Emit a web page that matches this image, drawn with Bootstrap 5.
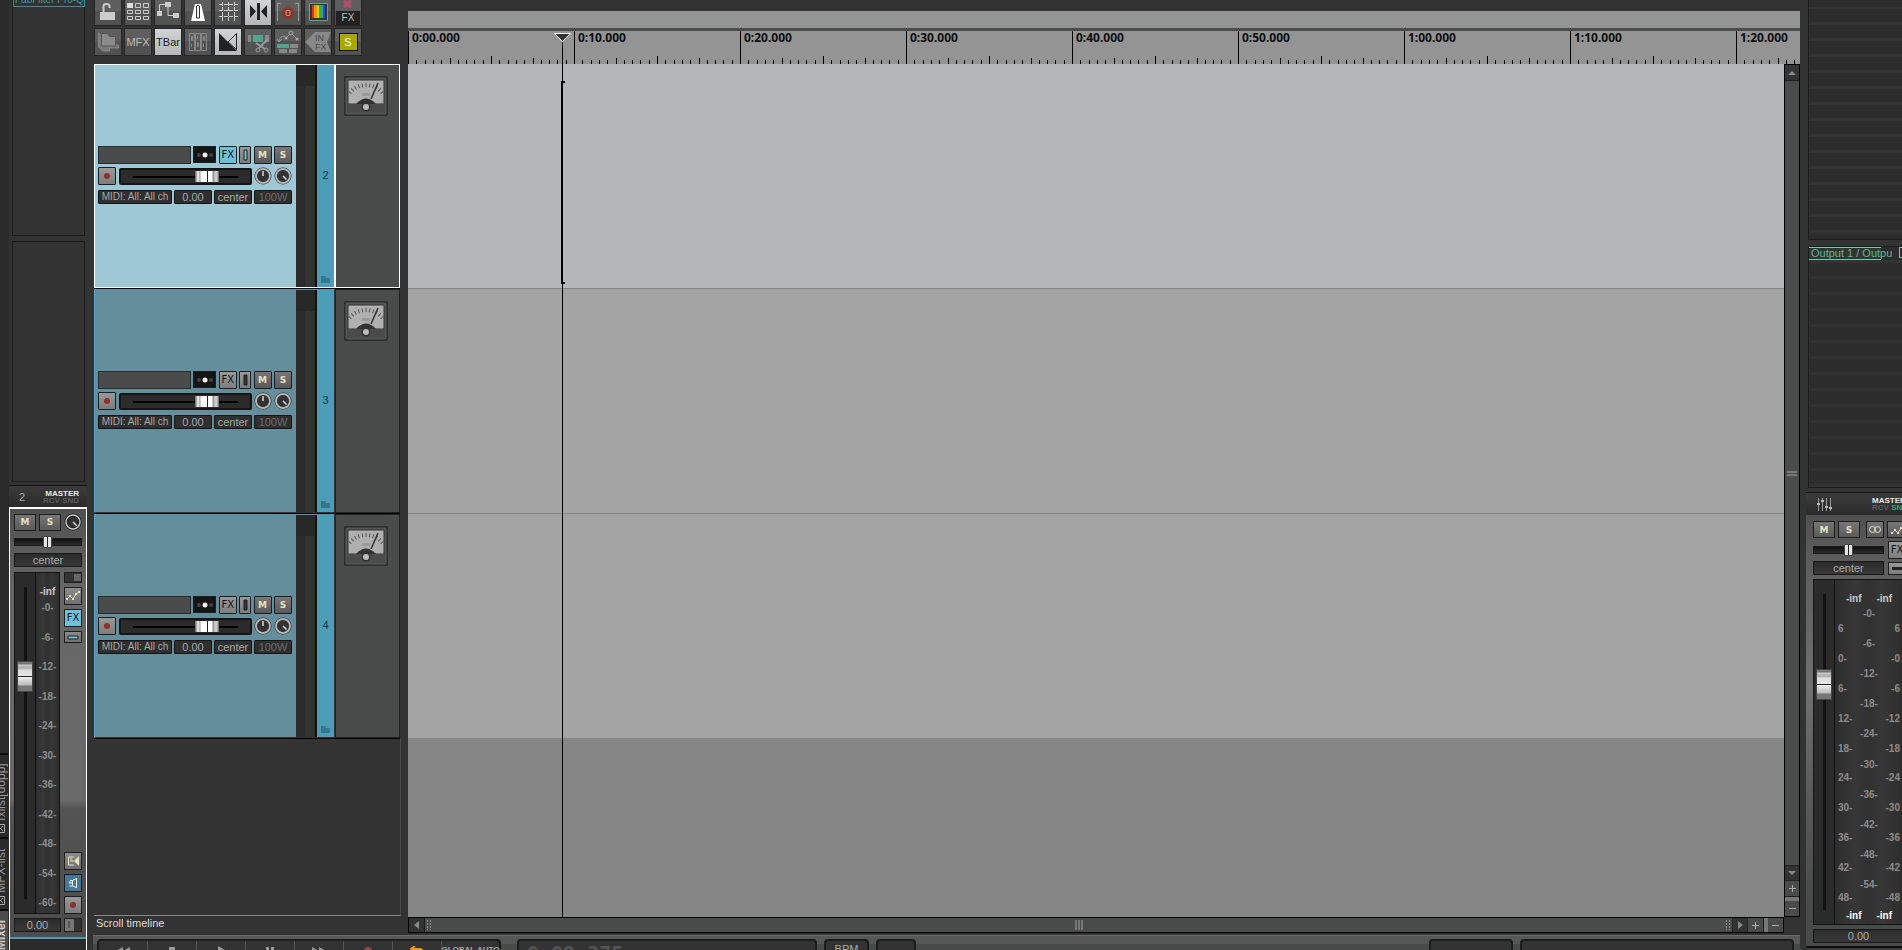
<!DOCTYPE html>
<html lang="en">
<head>
<meta charset="utf-8">
<meta name="viewport" content="width=device-width, initial-scale=1">
<title>Arrange view</title>
<link href="https://cdn.jsdelivr.net/npm/bootstrap@5.3.0/dist/css/bootstrap.min.css" rel="stylesheet">
<style>
:root{--ink:#1d1d1d;--panel:#333;--well:#2c2c2c;--steel:#4a4c4b}
body{background:var(--panel);color:#aaa;font:11px/14px "Liberation Sans",Arial,sans-serif}
button,input{font:inherit;color:inherit;border-radius:0}
button{padding:0;display:flex;align-items:center;justify-content:center;border:1px solid var(--ink);flex:none}
svg{display:block;flex:none}
.none-shrink{flex:none}

/* docker tabs at the far left */
.dock{width:9px;background:#2a2a2a;flex:none}
.dock-tab{writing-mode:vertical-rl;transform:rotate(180deg);width:14px;margin-left:-6px;border-bottom:1px solid #0b0b0b;font-size:12px;line-height:14px;color:#999;background:none;border-width:0 0 2px;justify-content:flex-start;white-space:nowrap;padding:0}
.dock-tab.tab-a{height:84px;padding-top:4px}
.dock-tab.tab-b{height:72px;padding-top:4px}
.dock-tab.tab-c{height:41px;background:#4c4c4c;font-weight:bold;color:#ccc}
.tick{width:9px;height:9px}

/* mixer strips */
.strip{width:78px;flex:none}
.fxlist{border:1px solid #1c1c1c;background:var(--panel);margin:0 2px 0 3px}
.fxslot{height:7px;border:1px solid #3b8ba3;border-top:0;color:#3f93ad;overflow:hidden;white-space:nowrap;width:72px;font-size:10px}
.fxslot span{display:block;margin-top:-6px;line-height:12px;padding-left:1px}
.striphead{height:22px;background:linear-gradient(#3b3b3b,#2b2b2b);border-top:1px solid #111}
.pix{font:bold 8px/7px "Liberation Sans",Arial,sans-serif;color:#e8e8e8;white-space:nowrap}
.pix .dim{color:#5a5a5a}
.pix .grn{color:#2fa97c}
.chan-l{border:1px solid #fff;border-width:2px 1px 0 1px;min-height:0;background:linear-gradient(#505050,#666 18%,#6a6a6a 66%,#535353 68%,#4c4c4c)}
.chan-r{background:linear-gradient(#505050,#5c5c5c 10%,#707070 40%,#5a5a5a 65%,#484a49 90%)}
.ms{width:22px;height:17px;background:linear-gradient(#777,#5a5a5a);color:#e6dfc0;font:bold 9px/12px "DejaVu Sans",sans-serif}
.sq{width:18px;height:18px;background:linear-gradient(#8b8b8b,#707070)}
.sq.on{background:#6fc0d8;color:#112}
.sq.blue{background:#45779a}
.fxt{font:10px/12px "DejaVu Sans",sans-serif;color:#111}
.vbox{background:linear-gradient(#2c2c2c,#383838);border:1px solid #181818;color:#aaa;text-align:center;height:14px;line-height:12px;white-space:nowrap}
.scale{font:bold 10px/12px "Liberation Sans",Arial,sans-serif;color:#8c8c8c}
.well{background:#2b2b2b;border:1px solid #141414}
.ladder{background:linear-gradient(90deg,#2d2d2d,#373737 30%,#303030 50%,#373737 70%,#2d2d2d)}

/* sliders */
input[type=range]{-webkit-appearance:none;appearance:none;margin:0;padding:0;flex:none;display:block}
.pan{width:68px;height:8px;background:linear-gradient(#111,#2b2b2b);border:1px solid #181818}
.pan.wide{width:71px}
.pan::-webkit-slider-thumb{-webkit-appearance:none;width:9px;height:12px;border:1px solid #444;background:linear-gradient(90deg,#e4e4e4 0 3px,#222 3px 4px,#e4e4e4 4px)}
.vol{width:133px;height:17px;border:2px solid #151515;border-radius:2px;background:linear-gradient(#000,#000) 12px 6px/105px 2px no-repeat #2b2b2b}
.vol::-webkit-slider-thumb{-webkit-appearance:none;width:24px;height:11px;background:linear-gradient(90deg,#777 0 1px,#ddd 2px 4px,#999 5px,#fff 6px 12px,#222 12px 13px,#fff 13px 17px,#888 18px,#ccc 20px 22px,#555)}
.fader{position:relative;width:21px;flex:none;border-right:1px solid #111;background:linear-gradient(#121212,#121212) 50% 50%/3px calc(100% - 28px) no-repeat #2b2b2b}
.fader input{position:absolute;inset:0;width:100%;height:100%;opacity:0}
.fader i{position:absolute;left:2px;width:16px;height:31px;border:1px solid #444;background:linear-gradient(#777 0 2px,#ccc 3px,#aaa 6px,#ddd 8px,#e4e4e4 14px,#222 14px 15px,#eee 15px,#bbb 23px,#777 24px)}

/* toolbar */
.toolbar{height:64px;padding:0 0 0 1px}
.tb{width:28px;height:28px;background:linear-gradient(#5e5e5e 45%,#525252 46%);border:1px solid #262626;color:#bbb}
.tb.top{height:26px;border-top:0}
.tb.lit{background:linear-gradient(#d2d3d5,#b4b6b8);color:#222}

/* track panel */
.tcp{width:315px;flex:none}
.trk{height:225px;margin:0 8px 0 1px;border-bottom:1px solid #000}
.trk-main{width:241px;border:1px solid transparent;border-left-color:#4fa9c4;border-top-color:#5598ad}
.trk-side{width:65px;border:1px solid #222;background:var(--steel);padding:11px 0 0 8px}
.sel .trk-main,.sel .trk-side{border-color:#fff}
.face{width:201px;background:#648e9b;padding:80px 4px 0 3px}
.sel .face{background:#9fc8d6}
.meter{width:20px;background:linear-gradient(90deg,#2c2c2c 9px,#353535 10px,#303030);border-right:1px solid #111}
.meter::before{content:"";display:block;height:21px;background:#282828}
.idx{width:18px;background:#4c9db6;border-left:1px solid #111;color:#12343e;padding:103px 0 4px;text-align:center}
.name{width:93px;height:18px;background:var(--steel);border:1px solid #2b2b2b}
.tbtn{width:18px;height:18px;border-radius:1px}
.io{width:23px;height:17px;background:#151515}
.grey{background:linear-gradient(#999,#7d7d7d)}
.sel .fxb{background:#6fbfd8}
.thin{width:12px}
.ro{height:14px;background:#2f2f2f;border:1px solid #151515;line-height:12px;border-radius:1px;text-align:center;color:#a8a8a8;white-space:nowrap}
.w38{width:38px}
.w74{width:74px;font-size:10px}
.empty{margin:0 7px 0 1px;border-right:1px solid #4a4a4a;border-bottom:1px solid #888}
.status{height:17px;color:#ddd;padding:0 3px;line-height:15px}

/* arrange */
.region{height:17px;margin-top:11px;background:#949494}
.ruler{height:36px;border-top:3px solid #4b4d4c;background:#949494}
.rule-text{font:bold 12px/14px "Noto Sans",sans-serif;fill:#0c0c0c}
.lanes{background:#868686}
.lane{height:225px;background:#a4a4a4;border-bottom:1px solid #858585}
.lane.sel{background:#b4b6b8}
.play{position:absolute;left:146px;top:33px;bottom:0;width:17px}
.play i{position:absolute;left:8px;top:9px;bottom:16px;width:1px;background:#000}
.brk{position:absolute;left:153px;top:81px;width:4px;height:203px;border:2px solid #000;border-right:0}
.sb{background:var(--steel);border:1px solid #000}
.vs{width:16px}
.hs{height:16px}
.vs button{width:14px;height:16px;border-width:0 0 1px;background:#333}
.hs button{width:16px;height:14px;border-width:0 1px 0 0;background:#333}
.vs .z,.hs .z{background:var(--steel)}
.nub{background:#777}
.transport{height:15px;margin-top:2px;background:linear-gradient(#6a6a6a 1px,#575757 1px 9px,#484a49 9px);padding:4px 6px 0 4px}
.tgroup{height:24px;background:var(--panel);border:2px solid #1c1c1c;border-radius:4px}
.tgroup button{width:49px;border-width:0 1px 0 0;border-color:#555;background:none;height:22px;align-items:flex-start;padding-top:5px}
.pos{width:300px;margin-left:16px;font:bold 20px/24px "DejaVu Sans Mono",monospace;color:#555;padding:0 0 0 8px;white-space:pre}

/* master strip at the right edge */
.mstr{width:96px;flex:none}
.slots{background:repeating-linear-gradient(#2c2c2c 0 13px,#333 13px 16px);border:1px solid #1c1c1c;border-width:0 0 1px 1px;margin-left:2px}
.send{height:13px;border:1px solid #69cdb0;border-width:1px 0;color:#5fb58e;line-height:11px;width:72px;white-space:nowrap;padding-left:2px;background:#333}
</style>
</head>
<body>
<div class="d-flex vh-100 overflow-hidden">

  <div class="dock d-flex flex-column justify-content-end overflow-hidden">
    <button class="dock-tab tab-a"><svg class="tick" viewBox="0 0 9 9"><path d="M.5.5h8v8h-8zM2 2l5 5M7 2l-5 5" fill="none" stroke="#aaa"/></svg>&nbsp;fxlist[dopp]</button>
    <button class="dock-tab tab-b"><svg class="tick" viewBox="0 0 9 9"><path d="M.5.5h8v8h-8zM2 2l5 5M7 2l-5 5" fill="none" stroke="#aaa"/></svg>&nbsp;MFX-list</button>
    <button class="dock-tab tab-c">Mixer</button>
  </div>

  <section class="strip d-flex flex-column" aria-label="Track 2 mixer strip">
    <div class="fxlist none-shrink border-top-0" style="height:236px"><div class="fxslot"><span>FabFilter Pro-Q</span></div></div>
    <div class="fxlist none-shrink" style="height:241px;margin-top:5px"></div>
    <div class="striphead d-flex align-items-center justify-content-between none-shrink pe-2" style="padding-left:10px;margin-top:3px">
      <span>2</span><span class="pix text-end">MASTER<br><span class="dim">RCV SND</span></span>
    </div>
    <div class="chan-l flex-grow-1 d-flex flex-column px-1">
      <div class="d-flex justify-content-between align-items-center pt-1">
        <button class="ms">M</button><button class="ms">S</button>
        <svg width="18" height="18" viewBox="0 0 18 18"><circle cx="9" cy="9" r="7" fill="#333" stroke="#111" stroke-width="3"/><circle cx="9" cy="9" r="7" fill="none" stroke="#ccc" stroke-width="1.5"/><path d="M9 9l4 4" stroke="#ddd" stroke-width="1.5"/></svg>
      </div>
      <input class="pan" style="margin-top:7px" type="range" value="49" aria-label="Pan">
      <div class="vbox" style="margin-top:7px">center</div>
      <div class="flex-grow-1 d-flex justify-content-between" style="min-height:0;margin-top:5px">
        <div class="well d-flex">
          <div class="fader"><input type="range" value="74" aria-label="Volume"><i style="top:26%"></i></div>
          <div class="ladder scale d-flex flex-column text-center" style="width:23px">
            <div class="text-light opacity-75" style="margin-top:13px">-inf</div>
            <div class="flex-grow-1 d-flex flex-column justify-content-between py-1" id="scaleL"></div>
          </div>
        </div>
        <div class="d-flex flex-column gap-1">
          <button class="sq" style="height:11px;background:#333" aria-label="Width"><svg width="16" height="9"><path d="M9 1h7v7H9z" fill="#666"/></svg></button>
          <button class="sq" aria-label="Envelopes"><svg width="16" height="16"><path d="M2 11l3-3 3 3 3-5 3-2" fill="none" stroke="#e6dfc0"/><path d="M1 10h2v2H1zM4 7h2v2H4zM7 10h2v2H7zM10 5h2v2h-2zM13 3h2v2h-2z" fill="#e6dfc0"/></svg></button>
          <button class="sq on fxt">FX</button>
          <button class="sq" style="height:12px" aria-label="FX bypass"><svg width="16" height="9"><path d="M3 3h10v3H3z" fill="#6fc0d8" stroke="#222"/></svg></button>
          <span class="flex-grow-1"></span>
          <button class="sq" aria-label="Input"><svg width="16" height="16"><path d="M9 4H3.500v8H9M5 8h4M5 6h2" fill="none" stroke="#e6dfc0"/><path d="M14 3v10L9 8z" fill="#e6dfc0"/></svg></button>
          <button class="sq blue" aria-label="Monitor"><svg width="16" height="16"><path d="M11.500 3.500v9L7.500 11h-3M11.500 3.500L7.500 5.500v5M7.500 5.500h-2L4 8h4" fill="none" stroke="#fff"/></svg></button>
          <button class="sq grey" aria-label="Record arm"><svg width="8" height="8"><circle cx="4" cy="4" r="3" fill="#8c2f2f"/></svg></button>
        </div>
      </div>
      <div class="d-flex justify-content-between" style="margin-top:4px">
        <div class="vbox" style="width:47px">0.00</div>
        <button class="sq" style="height:14px;background:#333" aria-label="Phase"><svg width="16" height="12"><path d="M0 0h9v12H0z" fill="#777"/><path d="M4 2v7" stroke="#333"/></svg></button>
      </div>
      <div class="none-shrink" style="height:13px;margin:5px -4px 0;background:#2b2b2b;border-top:2px solid #4c9db6"></div>
    </div>
  </section>

  <main class="flex-grow-1 d-flex flex-column" style="padding:0 6px 0 4px;min-width:0;margin-left:2px">
    <div class="d-flex flex-grow-1" style="min-height:0">
      <section class="tcp d-flex flex-column" aria-label="Track control panel">
        <div class="toolbar d-flex flex-column none-shrink" style="gap:2px">
          <div class="d-flex" style="gap:2px">
            <button class="tb top" aria-label="Lock"><svg width="26" height="25"><path d="M5 12h15v8H5z" fill="#ccc"/><path d="M8.500 12V6q0-2 3-2t3 2v2" fill="none" stroke="#ccc" stroke-width="2"/></svg></button>
            <button class="tb top" aria-label="Grouping"><svg width="26" height="25"><g fill="none" stroke="#ccc"><path d="M10.500 3.500h5v4h-5zM18.500 3.500h5v4h-5zM2.500 10.500h5v3h-5zM10.500 10.500h5v3h-5zM18.500 10.500h5v3h-5zM2.500 16.500h5v3h-5zM10.500 16.500h5v3h-5zM18.500 16.500h5v3h-5z"/></g><path d="M2 3h6v5H2z" fill="#ddd"/></svg></button>
            <button class="tb top" aria-label="Routing"><svg width="26" height="25"><path d="M2 11h5v5H2zM10 2h6v5h-6zM18 13h6v5h-6z" fill="#ccc"/><path d="M4.500 12V4.500h6M13 6v9.500h6" fill="none" stroke="#ccc"/></svg></button>
            <button class="tb top" aria-label="Metronome"><svg width="26" height="25"><path d="M10 4h6l4 17H6z" fill="#fff"/><path d="M11.500 18V6q1.500-2 3 0v12z" fill="#eee" stroke="#333"/></svg></button>
            <button class="tb top" aria-label="Grid"><svg width="26" height="25"><path d="M4 4.500h19M4 10.500h19M4 16.500h19M7.500 2v19M13.500 2v19M19.500 2v19" stroke="#ccc" stroke-dasharray="4 1" fill="none"/></svg></button>
            <button class="tb top lit" aria-label="Snap"><svg width="26" height="25"><path d="M12 3h3v17h-3zM5 5l6 6.500L5 18zM22 5l-6 6.500 6 6.500z" fill="#222"/></svg></button>
            <button class="tb top" aria-label="Auto punch"><svg width="26" height="25"><circle cx="13" cy="13" r="6" fill="#8a3626"/><rect x="11" y="10.500" width="4" height="5" rx="1" fill="none" stroke="#c98"/><path d="M2.500 21V3l4 1M23.500 21V3l-4 1" fill="none" stroke="#999"/></svg></button>
            <button class="tb top" aria-label="Colours"><svg width="26" height="25"><path d="M4.500 3.500h18v17h-18z" fill="#333" stroke="#54a896"/><path d="M7 5h2v13H7z" fill="#d23a1c"/><path d="M9 5h3v13H9z" fill="#e99a10"/><path d="M12 5h2v13h-2z" fill="#cfd010"/><path d="M14 5h2v13h-2z" fill="#3fae30"/><path d="M16 5h2v13h-2z" fill="#2a9bb0"/><path d="M18 5h2v13h-2z" fill="#2b52c0"/></svg></button>
            <button class="tb top flex-column justify-content-between" aria-label="Remove FX"><svg width="10" height="9"><path d="M1 1l7 6M8 1L1 7" stroke="#b0506c" stroke-width="3"/></svg><span style="background:#222;width:24px;line-height:14px;font-size:10px" class="d-block">FX</span></button>
          </div>
          <div class="d-flex" style="gap:2px">
            <button class="tb" aria-label="Project folder"><svg width="26" height="26"><path d="M3.500 3.500V18l4 4h7v-3h9v-3" fill="#7a7a7a" stroke="#888"/><path d="M6.500 17V4.500h6l2 3h6V17z" fill="#8a8a8a" stroke="#555"/></svg></button>
            <button class="tb">MFX</button>
            <button class="tb lit">TBar</button>
            <button class="tb" aria-label="Mixer"><svg width="26" height="26"><g fill="none" stroke="#888"><path d="M4.500 4.500h5v17h-5zM10.500 4.500h5v17h-5zM16.500 4.500h5v17h-5z"/><path d="M6.500 7.500h1v4h-1zM12.500 13.500h1v4h-1zM18.500 7.500h1v4h-1zM6.500 15v3M12.500 7v3M18.500 15v3"/></g></svg></button>
            <button class="tb lit" aria-label="Crossfade"><svg width="26" height="26"><path d="M4 4v18h18z" fill="#222"/><path d="M21.500 4.500v16L13 13z" fill="none" stroke="#222"/></svg></button>
            <button class="tb" aria-label="Split items"><svg width="26" height="26"><path d="M8 6h10v7H8z" fill="#55a38d"/><path d="M3 6h3v7H3zM20 6h4v7h-4z" fill="#888"/><path d="M11 14l9 6M23 10l-9 9" stroke="#999" stroke-width="2"/><circle cx="13" cy="21" r="2" fill="none" stroke="#999"/><circle cx="21" cy="21" r="2" fill="none" stroke="#999"/></svg></button>
            <button class="tb" aria-label="Move envelopes"><svg width="26" height="26"><path d="M2 15h12v4H2z" fill="#55a38d"/><path d="M15 15h8v4h-8zM4 20h8v4H4zM14 20h8v4h-8z" fill="#888"/><path d="M4 13q0-6 6-6M11 9l5-5 6 6M2 10l2 3 3-3" fill="none" stroke="#999"/><circle cx="16" cy="4" r="2" fill="#666" stroke="#aaa"/><circle cx="11" cy="9" r="1.500" fill="#aaa"/><circle cx="22" cy="10" r="1.500" fill="#aaa"/></svg></button>
            <button class="tb" aria-label="Input FX"><svg width="26" height="26"><path d="M0 13L10 3h16l-4 10 4 10H10z" fill="#888"/><text x="10" y="12" font-size="9" fill="#4a4a4a">IN</text><text x="10" y="21" font-size="9" fill="#4a4a4a">FX</text></svg></button>
            <button class="tb"><span style="width:19px;height:18px;line-height:16px;background:#a8a800;border:1px solid #111;color:#fff">S</span></button>
          </div>
        </div>
        <div id="tracks" class="none-shrink"></div>
        <div class="empty flex-grow-1"></div>
        <div class="status none-shrink">Scroll timeline</div>
      </section>

      <section class="flex-grow-1 d-flex flex-column position-relative" style="min-width:0" aria-label="Arrange">
        <div class="region none-shrink"></div>
        <div class="ruler none-shrink overflow-hidden"><svg id="ruler" width="100%" height="33"></svg></div>
        <div class="d-flex flex-grow-1" style="min-height:0">
          <div class="lanes flex-grow-1"><div class="lane sel"></div><div class="lane"></div><div class="lane"></div></div>
          <div class="sb vs d-flex flex-column">
            <button aria-label="Scroll up"><svg width="8" height="5"><path d="M0 5l4-4 4 4z" fill="#888"/></svg></button>
            <div class="flex-grow-1 d-flex flex-column justify-content-center align-items-center" style="gap:1px"><i class="nub" style="width:10px;height:2px"></i><i class="nub" style="width:10px;height:2px"></i></div>
            <button class="border-top border-dark" aria-label="Scroll down"><svg width="8" height="5"><path d="M0 0h8L4 4z" fill="#888"/></svg></button>
            <button class="z" aria-label="Zoom in vertically"><svg width="7" height="7"><path d="M0 3.500h7M3.500 0v7" stroke="#aaa"/></svg></button>
            <i class="nub" style="height:4px"></i>
            <button class="z border-0" style="height:15px" aria-label="Zoom out vertically"><svg width="7" height="7"><path d="M0 3.500h7" stroke="#aaa"/></svg></button>
          </div>
        </div>
        <div class="d-flex none-shrink">
          <div class="sb hs flex-grow-1 d-flex">
            <button aria-label="Scroll left"><svg width="5" height="8"><path d="M5 0v8L0 4z" fill="#888"/></svg></button>
            <svg width="8" height="14"><path d="M2.500 2v10M5.500 2v10" stroke="#888" stroke-dasharray="2 1"/></svg>
            <div class="flex-grow-1 d-flex justify-content-center align-items-center" style="gap:1px"><i class="nub" style="width:2px;height:10px"></i><i class="nub" style="width:2px;height:10px"></i><i class="nub" style="width:2px;height:10px"></i></div>
            <svg width="8" height="14"><path d="M2.500 2v10M5.500 2v10" stroke="#888" stroke-dasharray="2 1"/></svg>
            <button class="border-start border-dark" aria-label="Scroll right"><svg width="5" height="8"><path d="M0 0v8l5-4z" fill="#888"/></svg></button>
            <button class="z" aria-label="Zoom in"><svg width="7" height="7"><path d="M0 3.500h7M3.500 0v7" stroke="#aaa"/></svg></button>
            <i class="nub" style="width:4px"></i>
            <button class="z border-0" style="width:15px" aria-label="Zoom out"><svg width="7" height="7"><path d="M0 3.500h7" stroke="#aaa"/></svg></button>
          </div>
          <div style="width:16px"></div>
        </div>
        <div class="play"><svg width="17" height="10"><path d="M.5.5h16L8.500 8.500z" fill="#333" stroke="#fff"/></svg><i></i></div>
        <div class="brk"></div>
      </section>
    </div>

    <div class="transport d-flex overflow-hidden none-shrink">
      <div class="tgroup d-flex none-shrink" style="width:404px">
        <button aria-label="Rewind"><svg width="14" height="10"><path d="M7 1v8L0 5zM14 1v8L7 5z" fill="#999"/></svg></button>
        <button aria-label="Stop"><svg width="6" height="8"><path d="M0 1h6v7H0z" fill="#999"/></svg></button>
        <button aria-label="Play"><svg width="8" height="10"><path d="M1 0v9l7-5z" fill="#999"/></svg></button>
        <button aria-label="Pause"><svg width="8" height="9"><path d="M0 1h3v8H0zM5 1h3v8H5z" fill="#999"/></svg></button>
        <button aria-label="Forward"><svg width="14" height="10"><path d="M0 1v8l7-4zM7 1v8l7-4z" fill="#999"/></svg></button>
        <button aria-label="Record"><svg width="10" height="10"><circle cx="5" cy="5" r="4" fill="#a04040"/></svg></button>
        <button aria-label="Repeat"><svg width="14" height="10"><path d="M1 3h9q3 0 3 5M5 0L1 3l4 3" fill="none" stroke="#f39a12" stroke-width="2"/></svg></button>
        <button class="border-0 pix" style="width:57px;color:#aaa">GLOBAL AUTO</button>
      </div>
      <div class="tgroup pos none-shrink">0:09.275</div>
      <div class="tgroup none-shrink text-center" style="width:45px;margin-left:7px;padding-top:1px">BPM</div>
      <div class="tgroup none-shrink" style="width:40px;margin-left:7px"></div>
      <div class="tgroup none-shrink ms-auto" style="width:84px"></div>
      <div class="tgroup none-shrink" style="width:274px;margin-left:7px"></div>
    </div>
  </main>

  <section class="mstr d-flex flex-column overflow-hidden" aria-label="Master strip">
    <div class="slots none-shrink" style="height:240px;background-position-y:9px"></div>
    <div class="slots none-shrink" style="height:242px;margin-top:6px;border-top:1px solid #1c1c1c">
      <div class="d-flex" style="gap:18px"><button class="send justify-content-start">Output 1 / Outpu</button><i class="none-shrink" style="width:12px;height:11px;border:1px solid #69cdb0"></i></div>
    </div>
    <div class="striphead d-flex align-items-center none-shrink" style="margin-top:4px;padding-left:10px;gap:39px;height:23px">
      <svg width="17" height="13"><path d="M2.500 0v13M6.500 0v13M10.500 0v13M14.500 0v13" stroke="#999"/><path d="M1 5h3v2H1zM5 2h3v2H5zM9 8h3v2H9zM13 9h3v2h-3z" fill="#bbb"/></svg>
      <span class="pix none-shrink">MASTER<br><span class="dim">RCV</span> <span class="grn">SND</span></span>
    </div>
    <div class="chan-r flex-grow-1 d-flex flex-column" style="padding:6px 0 0 7px;min-height:0">
      <div class="d-flex" style="gap:3px"><button class="ms">M</button><button class="ms">S</button>
        <button class="ms" style="width:18px;margin-left:3px" aria-label="Mono"><svg width="14" height="9"><g fill="none" stroke="#e6dfc0"><circle cx="4.500" cy="4.500" r="3"/><circle cx="9.500" cy="4.500" r="3"/></g></svg></button>
        <button class="ms" aria-label="Envelopes"><svg width="16" height="12"><path d="M2 9l3-3 3 3 3-5 3-1" fill="none" stroke="#e6dfc0"/><path d="M1 8h2v2H1zM4 5h2v2H4zM7 8h2v2H7zM10 3h2v2h-2z" fill="#e6dfc0"/></svg></button></div>
      <div class="d-flex" style="gap:4px;margin-top:3px">
        <div><input class="pan wide" style="margin-top:5px" type="range" value="50" aria-label="Master pan"><div class="vbox" style="margin-top:7px">center</div></div>
        <div><button class="sq grey fxt">FX</button><button class="sq grey" style="height:13px;margin-top:3px" aria-label="FX bypass"><svg width="12" height="5"><path d="M1 1h11v3H1z" fill="#222"/></svg></button></div>
      </div>
      <div class="well flex-grow-1 d-flex" style="min-height:0;margin:4px -2px 0 0">
        <div class="fader"><input type="range" value="74" aria-label="Master volume"><i style="top:26%"></i></div>
        <div class="ladder scale flex-grow-1 d-flex flex-column">
          <div class="d-flex justify-content-center text-light opacity-75" style="padding-top:13px;gap:15px">
            <span>-inf</span><span>-inf</span></div>
          <div class="d-flex flex-grow-1 justify-content-between" style="min-height:0;padding:0 3px 0 3px">
            <div class="d-flex flex-column justify-content-between" id="scaleA" style="width:16px;padding:18px 0 6px"></div>
            <div class="d-flex flex-column justify-content-between text-center" id="scaleB" style="padding:3px 0 19px"></div>
            <div class="d-flex flex-column justify-content-between text-end" id="scaleC" style="width:16px;padding:18px 0 6px"></div>
          </div>
          <div class="d-flex justify-content-center text-white" style="gap:15px;padding-bottom:2px"><span>-inf</span><span>-inf</span></div>
        </div>
      </div>
      <div class="vbox" style="width:91px;margin-top:4px">0.00</div>
      <div class="none-shrink" style="height:4px;margin:3px 0 0 -7px;border-top:2px solid #111;background:#3a3a3a"></div>
    </div>
  </section>
</div>

<script>
const knob = a => `<svg width="18" height="18" viewBox="0 0 18 18"><circle cx="9" cy="9" r="7" fill="#333" stroke="#222" stroke-width="3"/><circle cx="9" cy="9" r="7" fill="none" stroke="#b4b4b4" stroke-width="2"/><path d="M9 9V4" stroke="#ddd" stroke-width="1.500" transform="rotate(${a} 9 9)"/></svg>`;

let arcs = '';
for (let a = -50; a <= 50; a += 10) arcs += `<path d="M22 7v4" transform="rotate(${a} 22 30)" stroke="#555"/>`;
const vu = `<svg width="44" height="40" viewBox="0 0 44 40"><rect x=".5" y=".5" width="43" height="39" rx="3" fill="#555" stroke="#2e2e2e" stroke-width="2"/><path d="M4 4h36v24H4z" fill="#b0b0b0" stroke="#333"/>${arcs}<path d="M18 17h8v3h-8z" fill="#999"/><path d="M27 23l7-16" stroke="#333" stroke-width="1.500"/><path d="M12 28q10-11 20 0v2H12z" fill="#333"/><path d="M3 28h38v9H3z" fill="#4b4b4b"/><circle cx="22" cy="31" r="4.500" fill="#333"/><circle cx="22" cy="31" r="3" fill="#bbb"/></svg>`;

document.getElementById('tracks').innerHTML = [2, 3, 4].map((n, i) => `
<div class="trk d-flex ${i ? '' : 'sel'}">
  <div class="trk-main d-flex">
    <div class="face d-flex flex-column">
      <div class="d-flex justify-content-between align-items-center" style="height:19px">
        <input class="name" aria-label="Track ${n} name">
        <button class="io" aria-label="Routing"><svg width="18" height="6"><circle cx="3" cy="3" r="2" fill="#444"/><circle cx="9" cy="3" r="2.500" fill="#eee"/><circle cx="15" cy="3" r="2" fill="#444"/></svg></button>
        <button class="tbtn grey fxb fxt">FX</button>
        <button class="tbtn thin grey" aria-label="FX bypass"><svg width="5" height="12"><path d="M1 1h3v10H1z" fill="${i ? '#333' : '#6fc0d8'}" stroke="#222"/></svg></button>
        <button class="tbtn ms">M</button><button class="tbtn ms">S</button>
      </div>
      <div class="d-flex align-items-center" style="margin-top:3px;gap:2px">
        <button class="tbtn grey" style="margin-right:1px" aria-label="Record arm"><svg width="8" height="8"><circle cx="4" cy="4" r="3" fill="#8c2f2f"/></svg></button>
        <input class="vol" type="range" value="70" aria-label="Track ${n} volume">${knob(0)}${knob(135)}
      </div>
      <div class="d-flex justify-content-between" style="margin-top:5px">
        <button class="ro w74">MIDI: All: All ch</button><span class="ro w38">0.00</span><span class="ro w38">center</span><span class="ro w38" style="color:#6c6c6c">100W</span>
      </div>
    </div>
    <div class="meter"></div>
    <div class="idx d-flex flex-column justify-content-between align-items-center"><span>${n}</span><svg width="9" height="8"><path d="M0 1h4l1 2h4v5H0z" fill="#34788c"/></svg></div>
  </div>
  <div class="trk-side">${vu}</div>
</div>`).join('');

/* ruler: 166 px for every ten seconds, one tick each half second */
const STEP = 166;
const ruler = document.getElementById('ruler');
const drawRuler = () => {
  const wide = ruler.getBoundingClientRect().width;
  let marks = '';
  for (let t = 0; t * STEP / 20 < wide; t++) {
    const x = Math.round(t * STEP / 20), k = t % 20;
    const h = k === 0 ? 33 : k === 10 ? 8 : k % 5 === 0 ? 6 : 4;
    marks += `<rect x="${x}" y="${33 - h}" width="1" height="${h}" fill="#000"/>`;
    if (k === 0) {
      const s = t / 2;
      marks += `<text class="rule-text" x="${x + 4}" y="11">${Math.floor(s / 60)}:${String(s % 60).padStart(2, '0')}.000</text>`;
    }
  }
  ruler.innerHTML = marks;
};
drawRuler();
addEventListener('resize', drawRuler);

const fill = (id, list) => document.getElementById(id).innerHTML = list.map(v => `<span>${v}</span>`).join('');
const side = [6, 0, 6, 12, 18, 24, 30, 36, 42, 48];
fill('scaleL', [0, 6, 12, 18, 24, 30, 36, 42, 48, 54, 60].map(v => `-${v}-`));
fill('scaleB', [0, 6, 12, 18, 24, 30, 36, 42, 48, 54].map(v => `-${v}-`));
fill('scaleA', side.map((v, i) => i ? `${v}-` : v));
fill('scaleC', side.map((v, i) => i ? `-${v}` : v));
</script>
<script src="https://cdn.jsdelivr.net/npm/bootstrap@5.3.0/dist/js/bootstrap.bundle.min.js"></script>
</body>
</html>
